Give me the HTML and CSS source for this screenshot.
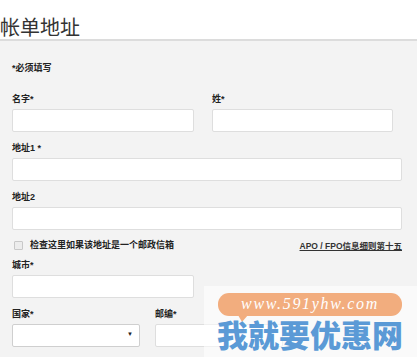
FILE: index.html
```html
<!DOCTYPE html>
<html lang="zh-CN">
<head>
    <meta charset="UTF-8">
    <meta name="viewport" content="width=device-width, initial-scale=1.0">
    <title>帐单地址</title>
    <link rel="stylesheet" href="styles.css">
</head>
<body>
    <h1 class="title">帐单地址</h1>

    <form class="panel">
        <p class="required-note">*必须填写</p>

        <div class="row row-name">
            <div class="field">
                <label for="firstName">名字*</label>
                <input type="text" id="firstName">
            </div>
            <div class="field">
                <label for="lastName">姓*</label>
                <input type="text" id="lastName">
            </div>
        </div>

        <div class="field">
            <label for="address1">地址1 *</label>
            <input type="text" id="address1">
        </div>

        <div class="field">
            <label for="address2">地址2</label>
            <input type="text" id="address2">
        </div>

        <div class="po-row">
            <label class="check">
                <span class="box"></span>
                检查这里如果该地址是一个邮政信箱
            </label>
            <a href="#" class="po-link">APO / FPO信息细则第十五</a>
        </div>

        <div class="field field-city">
            <label for="city">城市*</label>
            <input type="text" id="city">
        </div>

        <div class="row row-country">
            <div class="field">
                <label for="country">国家*</label>
                <div class="select">
                    <span class="arrow">&#9660;</span>
                </div>
            </div>
            <div class="field">
                <label for="zip">邮编*</label>
                <input type="text" id="zip">
            </div>
        </div>
    </form>

    <!-- site watermark over the bottom right corner -->
    <div class="watermark">
        <div class="wm-pill">www.591yhw.com</div>
        <div class="wm-name">我就要优惠网</div>
    </div>
</body>
</html>
```

FILE: styles.css
```css
html {
    background-color: #f3f3f3;
}
body {
    margin: 0;
    height: 357px;
    font-family: "Liberation Sans", "Noto Sans CJK SC", sans-serif;
    color: #222;
    overflow: hidden;
}
.title {
    margin: 0;
    padding-top: 15px;
    height: 24px;
    line-height: 24px;
    font-family: "Noto Sans CJK SC", sans-serif;
    font-size: 20px;
    font-weight: 400;
    color: #333;
    background-color: #fff;
    border-bottom: 2px solid #dcdcdc;
}
.panel {
    padding: 21px 15px 0 12px;
}
.required-note {
    margin: 0 0 19px;
    font-size: 9px;
    line-height: 12px;
    font-weight: bold;
}
.field {
    margin-bottom: 10px;
}
label {
    display: block;
    font-size: 9px;
    line-height: 12px;
    font-weight: bold;
    margin-bottom: 4px;
}
input, .select {
    display: block;
    box-sizing: border-box;
    width: 100%;
    height: 23px;
    margin: 0;
    background-color: #fff;
    border: 1px solid #dedede;
    border-radius: 2px;
}
.row {
    display: grid;
    grid-template-columns: 182px 181px;
    column-gap: 18px;
}
.po-row {
    display: flex;
    justify-content: space-between;
    align-items: center;
    height: 14px;
    margin-top: -2px;
    margin-bottom: 7px;
}
.check {
    display: flex;
    align-items: center;
    margin: 0;
    padding-left: 2px;
}
.box {
    width: 7px;
    height: 7px;
    border: 1px solid #c8c8c8;
    background-color: #ececec;
    border-radius: 1px;
    margin-right: 7px;
}
.po-link {
    font-size: 8.5px;
    font-weight: bold;
    color: #333;
}
.field-city {
    width: 182px;
}
.row-country {
    grid-template-columns: 128px 128px;
    column-gap: 15px;
}
.select {
    position: relative;
    border-color: #cfcfcf;
}
.arrow {
    position: absolute;
    right: 6px;
    top: 6px;
    font-size: 6px;
    color: #222;
}
.watermark {
    position: absolute;
    left: 204px;
    top: 286px;
    width: 213px;
    height: 71px;
    background-color: rgba(255, 255, 255, 0.55);
}
.wm-pill {
    position: absolute;
    left: 14px;
    top: 7px;
    width: 184px;
    height: 23px;
    line-height: 22px;
    border-radius: 11px;
    background-color: #f2ad7e;
    color: #fff;
    font-family: "Liberation Serif", serif;
    font-style: italic;
    font-size: 16px;
    letter-spacing: 1.7px;
    text-align: center;
}
.wm-pill::after {
    content: "";
    position: absolute;
    left: 20px;
    bottom: -6px;
    border-left: 4px solid transparent;
    border-right: 6px solid transparent;
    border-top: 7px solid #f2ad7e;
}
.wm-name {
    position: absolute;
    left: 13px;
    top: 34px;
    font-family: "Noto Sans CJK SC", sans-serif;
    font-weight: 900;
    font-size: 31px;
    line-height: 28px;
    color: #5b9ad6;
}
```
